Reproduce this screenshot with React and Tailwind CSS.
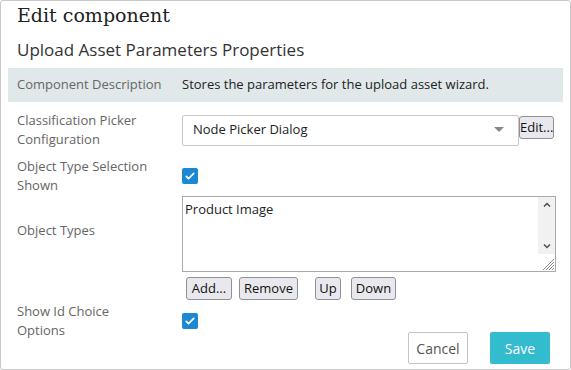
import React from 'react';

const Check = () => (
  <div className="w-4 h-4 shrink-0 rounded-[2px] bg-[#1c87d2] flex items-center justify-center">
    <svg viewBox="0 0 16 16" className="w-[12px] h-[12px]" fill="none" stroke="white" strokeWidth="2.2" strokeLinecap="round" strokeLinejoin="round">
      <path d="M3 8.5l3 3 7-7" />
    </svg>
  </div>
);

const SmallButton = ({ children, className = '' }) => (
  <button className={`shrink-0 h-[23px] bg-[#e9e9ed] border border-[#8f8f9d] rounded-[3px] text-[13px] text-[#111] leading-none ${className}`}>
    {children}
  </button>
);

const Label = ({ children }) => (
  <div className="w-[165px] shrink-0 text-[#666] leading-[19px] pr-[22px]">{children}</div>
);

const App = () => {
  return (
    <div className="w-[571px] h-[370px] bg-white border border-[#c8c8c8] rounded-[3px] font-['Open_Sans',sans-serif] text-[13px] text-[#333] overflow-hidden">
      <h1 className="font-['DejaVu_Serif',serif] text-[19px] leading-[26px] text-[#222] ml-[16px] mt-[1px]">Edit component</h1>
      <h2 className="text-[17px] leading-[24px] text-[#333] ml-[16px] mt-[10px]">Upload Asset Parameters Properties</h2>

      <div className="mx-[7px] mt-[6px] h-[34px] bg-[#e1e8ea] flex items-center">
        <div className="w-[174px] shrink-0 pl-[9px] text-[#666]">Component Description</div>
        <div className="text-[#222]">Stores the parameters for the upload asset wizard.</div>
      </div>

      <div className="pl-[16px]">
        <div className="flex items-center mt-[9px]">
          <Label>Classification Picker Configuration</Label>
          <div className="w-[337px] shrink-0 h-[31px] border border-[#c8c8c8] rounded-[2px] flex items-center justify-between pl-[10px] pr-[14px] text-[#222]">
            <span>Node Picker Dialog</span>
            <svg viewBox="0 0 10 6" className="w-[10px] h-[6px]"><path d="M0 0h10L5 5z" fill="#888" /></svg>
          </div>
          <SmallButton className="h-[22px] w-[35px] px-0 text-[12px] -mt-[6px]">Edit...</SmallButton>
        </div>

        <div className="flex items-center mt-[8px]">
          <Label>Object Type Selection Shown</Label>
          <Check />
        </div>

        <div className="flex items-center mt-[1px]">
          <Label>
            <div className="-mt-[7px]">Object Types</div>
          </Label>
          <div className="w-[374px] shrink-0 h-[76px] border border-[#a9a9a9] flex">
            <div className="flex-1 pl-[2px] pt-[3px] text-[#222] leading-[19px]">Product Image</div>
            <div className="w-[17px] flex flex-col">
              <div className="flex-1 bg-[#f1f1f1] flex flex-col items-center justify-between py-[5px]">
                <svg viewBox="0 0 8 5" className="w-[8px] h-[5px]"><path d="M1 4.5L4 1.5l3 3" fill="none" stroke="#505050" strokeWidth="1.5" /></svg>
                <svg viewBox="0 0 8 5" className="w-[8px] h-[5px]"><path d="M1 0.5L4 3.5l3-3" fill="none" stroke="#505050" strokeWidth="1.5" /></svg>
              </div>
              <svg viewBox="0 0 17 17" className="w-[17px] h-[17px]">
                <path d="M16 5L5 16M16 8L8 16M16 11L11 16M16 14L14 16" stroke="#8a8a8a" strokeWidth="1" />
              </svg>
            </div>
          </div>
        </div>

        <div className="flex mt-[5px] ml-[169px]">
          <SmallButton className="w-[46px] px-0">Add...</SmallButton>
          <SmallButton className="w-[59px] px-0 ml-[7px]">Remove</SmallButton>
          <SmallButton className="w-[26px] px-0 ml-[17px]">Up</SmallButton>
          <SmallButton className="w-[45px] px-0 ml-[10px]">Down</SmallButton>
        </div>

        <div className="flex items-center mt-[2px]">
          <Label>Show Id Choice Options</Label>
          <Check />
        </div>
      </div>

      <div className="flex justify-end gap-[22px] pr-[20px] -mt-[8px]">
        <button className="w-[60px] h-[32px] border border-[#c4c4c4] rounded-[2px] bg-white text-[14px] text-[#555]">Cancel</button>
        <button className="w-[60px] h-[32px] rounded-[2px] bg-[#33bccd] text-[14px] text-white">Save</button>
      </div>
    </div>
  );
};

export default App;
